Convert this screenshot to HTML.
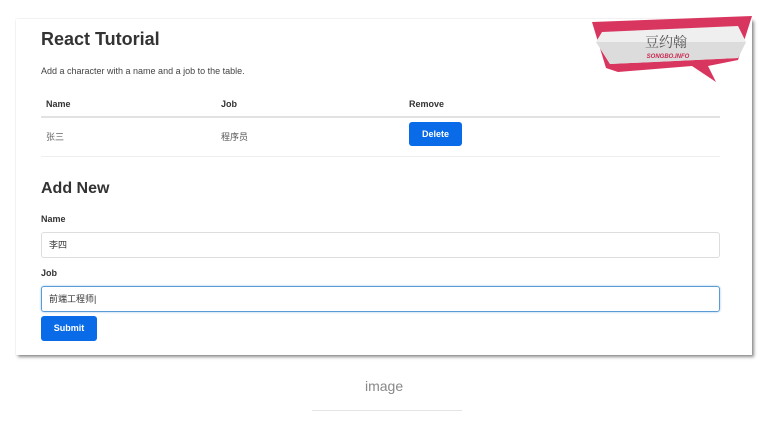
<!DOCTYPE html>
<html><head><meta charset="utf-8"><style>
body{margin:0;width:776px;height:422px;background:#fff;font-family:"Liberation Sans","Noto Sans CJK SC",sans-serif;color:#333;position:relative;overflow:hidden}
.card{position:absolute;left:16px;top:19px;width:736px;height:336px;background:#fff;box-shadow:2px 2px 3px rgba(0,0,0,.45),0 0 1px rgba(0,0,0,.15)}
.a{position:absolute;white-space:nowrap}
h1{position:absolute;left:41px;top:29px;margin:0;font-size:18px;font-weight:bold;color:#333}
.btn{position:absolute;background:#0a6be8;color:#fff;font-weight:bold;font-size:9px;border-radius:3px;text-align:center}
.inp{position:absolute;left:41px;height:24px;border:1px solid #ddd;border-radius:3px;font-size:9px;line-height:24px;padding-left:7px;box-sizing:border-box;width:679px}
.hr{position:absolute;left:41px;width:679px;height:1px;background:#ddd}
</style></head><body>
<div class="card"></div>
<h1>React Tutorial</h1>
<div class="a" style="left:41px;top:66px;font-size:9px;color:#444">Add a character with a name and a job to the table.</div>
<div class="a" style="left:46px;top:99px;font-size:9px;font-weight:bold">Name</div>
<div class="a" style="left:221px;top:99px;font-size:9px;font-weight:bold">Job</div>
<div class="a" style="left:409px;top:99px;font-size:9px;font-weight:bold">Remove</div>
<div class="hr" style="top:116px;height:2px;background:#e2e2e2"></div>
<div class="a" style="left:46px;top:130px;font-size:9px;color:#666">张三</div>
<div class="a" style="left:221px;top:130px;font-size:9px;color:#555">程序员</div>
<div class="btn" style="left:409px;top:122px;width:53px;height:24px;line-height:24px">Delete</div>
<div class="hr" style="top:156px;background:#eee"></div>
<div class="a" style="left:41px;top:180px;font-size:16px;font-weight:bold">Add New</div>
<div class="a" style="left:41px;top:214px;font-size:9px;font-weight:bold">Name</div>
<div class="inp" style="top:232px;height:26px;line-height:25px">李四</div>
<div class="a" style="left:41px;top:268px;font-size:9px;font-weight:bold">Job</div>
<div class="inp" style="top:286px;height:26px;line-height:25px;border-color:#5b9bd5;box-shadow:0 0 2px #9cc4ee">前端工程师|</div>
<div class="btn" style="left:41px;top:316px;width:56px;height:25px;line-height:25px">Submit</div>
<div class="a" style="left:365px;top:378px;font-size:14px;color:#888">image</div>
<div style="position:absolute;left:312px;top:410px;width:150px;height:1px;background:#e5e5e5"></div>
<svg style="position:absolute;left:588px;top:14px" width="170" height="72" viewBox="0 0 170 72">
<polygon points="4,8 164,2 150,46 120,52 128,68 104,52 30,58 18,54" fill="#d9365f"/>
<polygon points="14,18 150,12 158,28 150,44 22,50 8,28" fill="#efefef"/>
<polygon points="8,28 22,50 150,44 158,28" fill="#dcdcdc"/>
<text x="78" y="33" font-size="14" fill="#555" font-family="Noto Serif CJK SC,serif" text-anchor="middle">豆约翰</text>
<text x="80" y="44" font-size="6" fill="#c8284f" font-weight="bold" font-style="italic" font-family="Liberation Sans,sans-serif" text-anchor="middle">SONGBO.INFO</text>
</svg>
</body></html>
